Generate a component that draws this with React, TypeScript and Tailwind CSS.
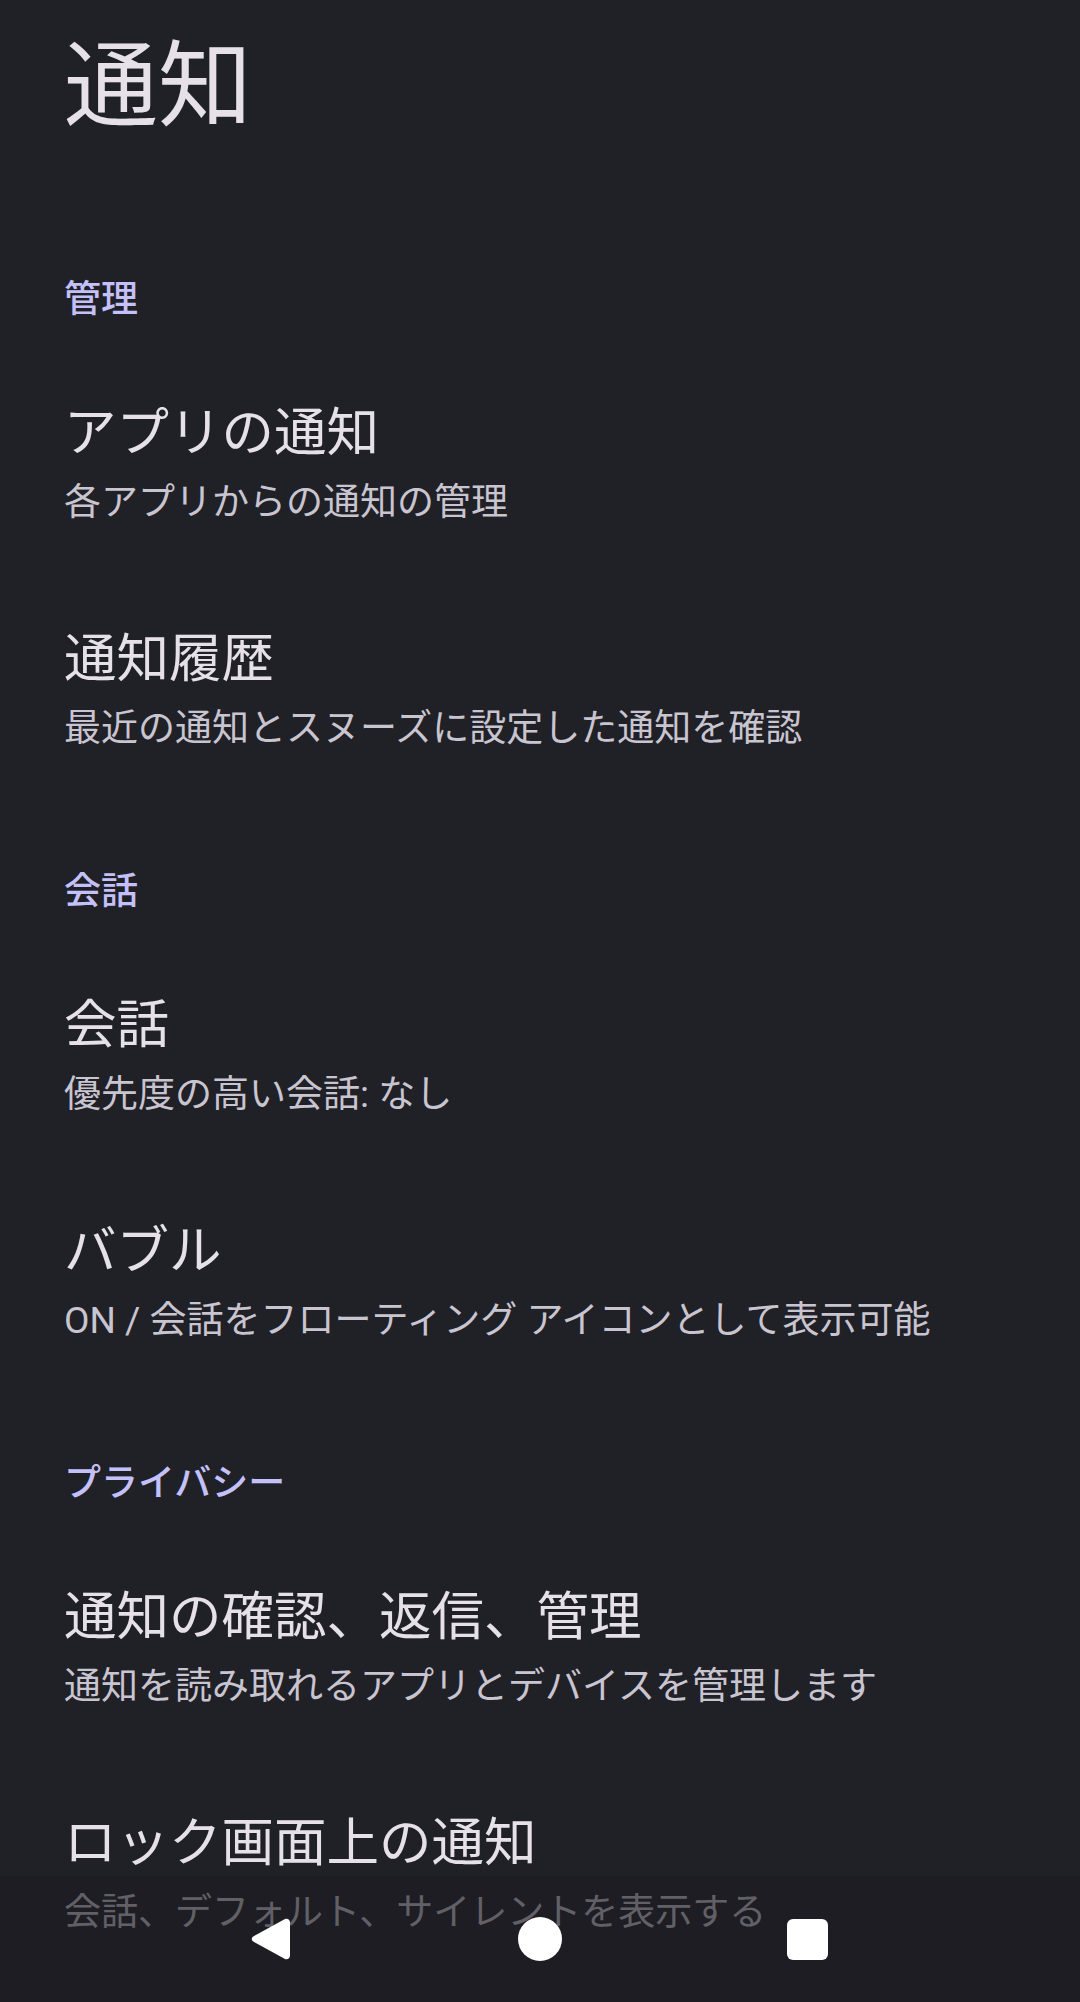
import React from "react";

type Item = { title: string; summary: string };
type Section = { header: string; items: Item[] };

const sections: Section[] = [
  {
    header: "管理",
    items: [
      { title: "アプリの通知", summary: "各アプリからの通知の管理" },
      { title: "通知履歴", summary: "最近の通知とスヌーズに設定した通知を確認" },
    ],
  },
  {
    header: "会話",
    items: [
      { title: "会話", summary: "優先度の高い会話: なし" },
      { title: "バブル", summary: "ON / 会話をフローティング アイコンとして表示可能" },
    ],
  },
  {
    header: "プライバシー",
    items: [
      { title: "通知の確認、返信、管理", summary: "通知を読み取れるアプリとデバイスを管理します" },
      { title: "ロック画面上の通知", summary: "会話、デフォルト、サイレントを表示する" },
    ],
  },
];

function NavBar() {
  return (
    <div className="absolute left-0 right-0 bottom-0 h-[126px] bg-[#1c1c21]/60 pt-[40px]">
      <div className="flex items-center pl-[249px]">
        {/* back */}
        <svg width="42" height="46" viewBox="0 0 42 46">
          <path
            d="M36 3 C38.5 2 41 3.5 41 6.5 L41 39.5 C41 42.5 38.5 44 36 43 L5 26 C2 24.5 2 21.5 5 20 Z"
            fill="#ffffff"
          />
        </svg>
        <div className="w-[227px]" />
        {/* home */}
        <div className="w-[44px] h-[44px] rounded-full bg-white" />
        <div className="w-[225px]" />
        {/* recents */}
        <div className="w-[41px] h-[41px] rounded-[6px] bg-white" />
      </div>
    </div>
  );
}

export default function App() {
  return (
    <div
      className="relative w-[1080px] h-[2002px] overflow-hidden bg-[#202027]"
      style={{ fontFamily: 'Roboto, "Noto Sans CJK JP", sans-serif' }}
    >
      <div className="px-[64px]">
        {/* Page title */}
        <div className="pt-[32px] pb-[70px]">
          <h1 className="text-[94px] leading-[110px] text-[#e6e1e9] font-normal">通知</h1>
        </div>

        {sections.map((section) => (
          <div key={section.header}>
            <div className="pt-[63px] pb-[27px]">
              <div className="text-[37px] leading-[50px] font-medium text-[#c4c0fa]">{section.header}</div>
            </div>
            {section.items.map((item) => (
              <div key={item.title} className="py-[43px]">
                <div className="text-[52.5px] leading-[76px] text-[#e6e1e9] whitespace-nowrap">{item.title}</div>
                <div className="text-[37px] leading-[64px] whitespace-nowrap text-[#c9c5d0]">{item.summary}</div>
              </div>
            ))}
          </div>
        ))}
      </div>

      <NavBar />
    </div>
  );
}
